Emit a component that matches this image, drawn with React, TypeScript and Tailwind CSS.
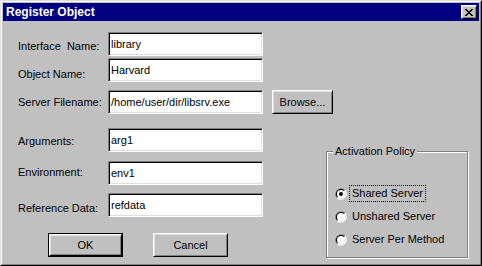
import React from 'react';

const xPattern = ['xx....xx', '.xx..xx.', '..xxxx..', '...xx...', '..xxxx..', '.xx..xx.', 'xx....xx'];

function CloseGlyph() {
  return (
    <svg width="8" height="7" viewBox="0 0 8 7" shapeRendering="crispEdges">
      {xPattern.map((row, y) =>
        row.split('').map((c, x) => (c === 'x' ? <rect key={`${x}-${y}`} x={x} y={y} width="1" height="1" fill="#000" /> : null))
      )}
    </svg>
  );
}

function Radio({ checked }: { checked?: boolean }) {
  return (
    <svg width="12" height="12" viewBox="0 0 12 12" className="shrink-0">
      <path d="M1.76 10.24 A6 6 0 0 1 10.24 1.76 Z" fill="#808080" />
      <path d="M10.24 1.76 A6 6 0 0 1 1.76 10.24 Z" fill="#fff" />
      <path d="M2.46 9.54 A5 5 0 0 1 9.54 2.46 Z" fill="#000" />
      <path d="M9.54 2.46 A5 5 0 0 1 2.46 9.54 Z" fill="#dfdfdf" />
      <circle cx="6" cy="6" r="4" fill="#fff" />
      {checked && <circle cx="6" cy="6" r="2" fill="#000" />}
    </svg>
  );
}

const inputClass =
  'h-6 w-[155px] bg-white pl-[2px] text-[11px] text-black outline-none border border-t-[#808080] border-l-[#808080] border-r-white border-b-white shadow-[inset_1px_1px_0_#000,inset_-1px_-1px_0_#dfdfdf]';

const buttonClass =
  'h-full w-full bg-[#c0c0c0] text-[11px] text-black border border-t-white border-l-white border-r-black border-b-black shadow-[inset_1px_1px_0_#dfdfdf,inset_-1px_-1px_0_#808080]';

interface FieldProps {
  label: string;
  value: string;
  rowClass: string;
  labelClass: string;
  children?: React.ReactNode;
}

function Field({ label, value, rowClass, labelClass, children }: FieldProps) {
  return (
    <div className={`flex items-start ${rowClass}`}>
      <div className={`w-[90px] whitespace-pre leading-[13px] ${labelClass}`}>{label}</div>
      <input readOnly value={value} className={inputClass} />
      {children}
    </div>
  );
}

function RadioRow({ label, checked }: { label: string; checked?: boolean }) {
  return (
    <div className="flex h-[17px] items-center">
      <Radio checked={checked} />
      <span
        className={`ml-[2px] flex h-[17px] items-center px-[2px] leading-[13px] border ${
          checked ? 'border-dotted border-black' : 'border-transparent'
        }`}
      >
        {label}
      </span>
    </div>
  );
}

export default function App() {
  return (
    <div className="h-[266px] w-[482px] bg-[#c0c0c0] font-['Liberation_Sans',Arial,sans-serif] text-[11px] text-black border border-t-[#dfdfdf] border-l-[#dfdfdf] border-r-black border-b-black">
      <div className="flex h-full flex-col p-px border border-t-white border-l-white border-r-[#808080] border-b-[#808080]">
        {/* Title bar */}
        <div className="flex h-[18px] shrink-0 items-center justify-between bg-[#000080] pl-[3px] pr-[2px]">
          <span className="text-[12px] font-bold leading-[14px] text-white">Register Object</span>
          <button className="flex h-[14px] w-[16px] items-center justify-center bg-[#c0c0c0] border border-t-white border-l-white border-r-black border-b-black shadow-[inset_1px_1px_0_#dfdfdf,inset_-1px_-1px_0_#808080]">
            <CloseGlyph />
          </button>
        </div>

        {/* Body */}
        <div className="flex flex-col pl-[15px]">
          <Field label="Interface  Name:" value="library" rowClass="mt-[11px]" labelClass="mt-[8px]" />
          <Field label="Object Name:" value="Harvard" rowClass="mt-[2px]" labelClass="mt-[10px]" />
          <Field label="Server Filename:" value="/home/user/dir/libsrv.exe" rowClass="mt-[8px]" labelClass="mt-[6px]">
            <div className="ml-[9px] h-6 w-[61px]">
              <button className={buttonClass}>Browse...</button>
            </div>
          </Field>

          <div className="flex">
            <div className="flex w-[308px] flex-col">
              <Field label="Arguments:" value="arg1" rowClass="mt-[14px]" labelClass="mt-[7px]" />
              <Field label="Environment:" value="env1" rowClass="mt-[9px]" labelClass="mt-[5px]" />
              <Field label="Reference Data:" value="refdata" rowClass="mt-[8px]" labelClass="mt-[9px]" />

              <div className="mt-[16px] ml-[30px] flex gap-[30px]">
                <div className="h-6 w-[75px] border border-black">
                  <button className={buttonClass}>OK</button>
                </div>
                <div className="h-6 w-[75px]">
                  <button className={buttonClass}>Cancel</button>
                </div>
              </div>
            </div>

            {/* Activation Policy group */}
            <div className="relative mt-[37px] h-[107px] w-[142px] border border-[#808080] shadow-[1px_1px_0_#fff,inset_1px_1px_0_#fff]">
              <span className="absolute -top-[7px] left-[6px] bg-[#c0c0c0] px-[2px] leading-[13px]">Activation Policy</span>
              <div className="flex flex-col gap-[6px] pl-[8px] pt-[33px]">
                <RadioRow label="Shared Server" checked />
                <RadioRow label="Unshared Server" />
                <RadioRow label="Server Per Method" />
              </div>
            </div>
          </div>
        </div>
      </div>
    </div>
  );
}
